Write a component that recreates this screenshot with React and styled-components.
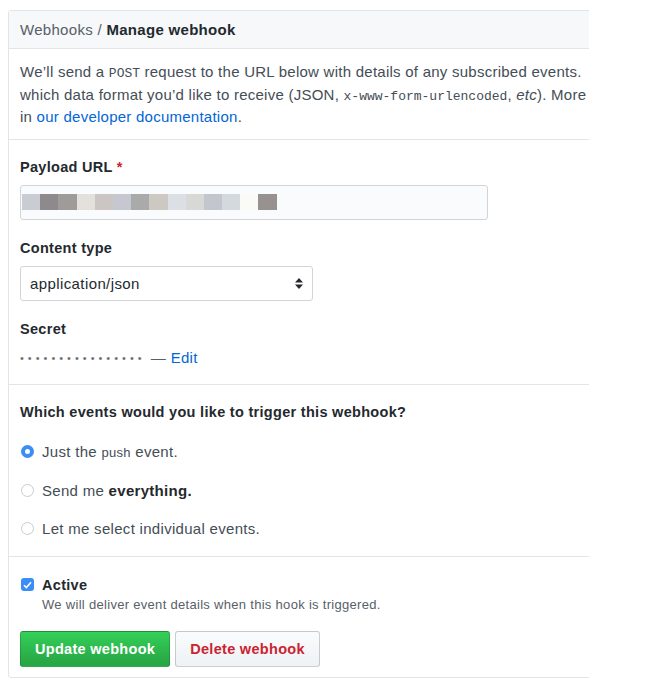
import styled, { createGlobalStyle } from 'styled-components';

const GlobalStyle = createGlobalStyle`
  *, *::before, *::after {
    box-sizing: border-box;
  }
  body {
    margin: 0;
    background: #fff;
    font-family: 'Liberation Sans', Arial, sans-serif;
    color: #24292e;
  }
`;

const Page = styled.div`
  padding: 10px 0 0 8px;
`;

const Frame = styled.div`
  width: 581px;
  overflow: hidden;
`;

const Box = styled.div`
  width: 720px;
  border: 1px solid #e1e4e8;
  border-radius: 3px;
  background: #fff;
`;

const Header = styled.div`
  height: 38px;
  display: flex;
  align-items: center;
  padding: 0 11px;
  background: #f6f8fa;
  border-bottom: 1px solid #e1e4e8;
  font-size: 15px;
  letter-spacing: 0.3px;
  color: #586069;

  strong {
    color: #24292e;
  }
`;

const Section = styled.div`
  padding: ${({ $pad }) => $pad || '17px 11px 16px'};
  border-bottom: ${({ $last }) => ($last ? 'none' : '1px solid #e1e4e8')};
`;

const Intro = styled.p`
  margin: 0;
  font-size: 15px;
  letter-spacing: 0.25px;
  line-height: 22.5px;
  color: #444d56;
  white-space: nowrap;

  code {
    font-family: 'Liberation Mono', monospace;
    font-size: 13px;
    letter-spacing: 0;
    line-height: 0;
  }

  a {
    color: #0366d6;
    text-decoration: none;
  }
`;

const Label = styled.div`
  font-size: 14.5px;
  letter-spacing: 0.3px;
  font-weight: bold;
  line-height: 20px;
  color: #24292e;
  margin-top: ${({ $gap }) => $gap || 0}px;

  span {
    color: #cb2431;
  }
`;

const UrlInput = styled.div`
  margin-top: 8px;
  width: 468px;
  height: 35px;
  border: 1px solid #d1d5da;
  border-radius: 3px;
  background: #fafbfc;
  display: flex;
  align-items: center;
  padding-left: 1px;
`;

const Pixel = styled.span`
  display: block;
  width: 18.2px;
  height: 16px;
  background: ${({ $c }) => $c};
`;

const Select = styled.div`
  margin-top: 8px;
  width: 293px;
  height: 35px;
  border: 1px solid #d1d5da;
  border-radius: 3px;
  background: #fff;
  display: flex;
  align-items: center;
  justify-content: space-between;
  padding: 0 9px 0 9px;
  font-size: 15px;
  letter-spacing: 0.4px;
  color: #24292e;
`;

const SecretRow = styled.div`
  margin-top: 9px;
  font-size: 15px;
  line-height: 20px;
  color: #586069;
  display: flex;
  align-items: center;
  gap: 5px;

  a {
    color: #0366d6;
    text-decoration: none;
    letter-spacing: 0.3px;
  }
`;

const Dots = styled.span`
  font-size: 11px;
  letter-spacing: 4px;
  color: #6a737d;
`;

const Question = styled.div`
  font-size: 14.5px;
  letter-spacing: 0.3px;
  font-weight: bold;
  line-height: 20px;
  color: #24292e;
`;

const Options = styled.div`
  display: flex;
  flex-direction: column;
  gap: 18.5px;
  margin-top: 20px;
`;

const Option = styled.label`
  display: flex;
  align-items: center;
  gap: 8px;
  height: 20px;
  font-size: 15px;
  letter-spacing: 0.3px;
  color: #444d56;

  small {
    font-size: 13px;
  }

  b {
    color: #24292e;
  }
`;

const Radio = styled.span`
  width: 13px;
  height: 13px;
  margin-left: 1px;
  border-radius: 50%;
  border: ${({ $on }) => ($on ? '4px solid #3a8ef6' : '1px solid #c9cdd1')};
  background: #fff;
  flex-shrink: 0;
`;

const CheckRow = styled.div`
  display: flex;
  align-items: center;
  gap: 8px;
  font-size: 14.5px;
  letter-spacing: 0.3px;
  font-weight: bold;
  line-height: 20px;
  color: #24292e;
`;

const Check = styled.span`
  width: 13px;
  height: 13px;
  margin-left: 1px;
  border-radius: 3px;
  background: #3a8ef6;
  display: flex;
  align-items: center;
  justify-content: center;
`;

const Note = styled.div`
  margin-top: 2px;
  padding-left: 22px;
  font-size: 13px;
  letter-spacing: 0.3px;
  line-height: 16px;
  color: #586069;
`;

const Actions = styled.div`
  display: flex;
  gap: 5px;
  margin-top: 18px;
`;

const Button = styled.button`
  height: 36px;
  padding: 0 14px;
  border: 1px solid rgba(27, 31, 35, 0.2);
  border-radius: 3px;
  font-family: inherit;
  font-size: 14.5px;
  letter-spacing: 0.3px;
  font-weight: bold;
  color: ${({ $danger }) => ($danger ? '#cb2431' : '#fff')};
  background: ${({ $danger }) =>
    $danger
      ? 'linear-gradient(-180deg, #fafbfc 0%, #eff3f6 90%)'
      : 'linear-gradient(-180deg, #34d058 0%, #28a745 90%)'};
`;

const pixels = [
  '#c9cdd3', '#8e898c', '#9f9b98', '#e4e0dc', '#cbc6c3', '#c5c8d0', '#aaaaab',
  '#cdc9c2', '#dcdfe4', '#d8d8d6', '#c3c6cc', '#d4d9de', '#fafaf7', '#97928f',
];

export default function App() {
  return (
    <Page>
      <GlobalStyle />
      <Frame>
        <Box>
          <Header>
            Webhooks /&nbsp;<strong>Manage webhook</strong>
          </Header>
          <Section $pad="12px 11px 10px">
            <Intro>
              We’ll send a <code>POST</code> request to the URL below with details of any subscribed events.
              <br />
              which data format you’d like to receive (JSON, <code>x-www-form-urlencoded</code>, <i>etc</i>). More
              <br />
              in <a href="#">our developer documentation</a>.
            </Intro>
          </Section>
          <Section>
            <Label>
              Payload URL <span>*</span>
            </Label>
            <UrlInput>
              {pixels.map((c, i) => (
                <Pixel key={i} $c={c} />
              ))}
            </UrlInput>
            <Label $gap={18}>Content type</Label>
            <Select>
              application/json
              <svg width="8" height="11" viewBox="0 0 8 11">
                <path d="M4 0 L8 4.5 H0 Z M0 6.5 H8 L4 11 Z" fill="#24292e" />
              </svg>
            </Select>
            <Label $gap={18}>Secret</Label>
            <SecretRow>
              <Dots>••••••••••••••••</Dots>— <a href="#">Edit</a>
            </SecretRow>
          </Section>
          <Section $pad="17px 11px 17px">
            <Question>Which events would you like to trigger this webhook?</Question>
            <Options>
              <Option>
                <Radio $on />
                <span>
                  Just the <small>push</small> event.
                </span>
              </Option>
              <Option>
                <Radio />
                <span>
                  Send me <b>everything.</b>
                </span>
              </Option>
              <Option>
                <Radio />
                Let me select individual events.
              </Option>
            </Options>
          </Section>
          <Section $pad="18px 11px 10px" $last>
            <CheckRow>
              <Check>
                <svg width="9" height="8" viewBox="0 0 9 8">
                  <path d="M1 4.2 L3.4 6.6 L8 1.2" stroke="#fff" strokeWidth="1.6" fill="none" />
                </svg>
              </Check>
              Active
            </CheckRow>
            <Note>We will deliver event details when this hook is triggered.</Note>
            <Actions>
              <Button>Update webhook</Button>
              <Button $danger>Delete webhook</Button>
            </Actions>
          </Section>
        </Box>
      </Frame>
    </Page>
  );
}
